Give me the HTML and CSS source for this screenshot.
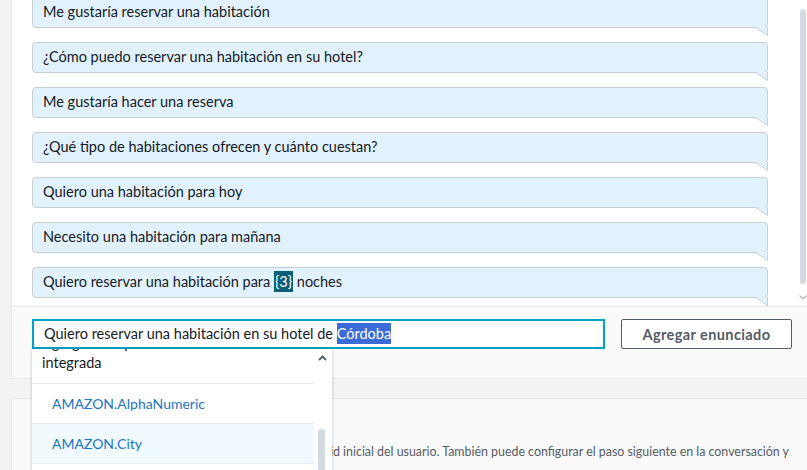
FILE: index.html
```
<!DOCTYPE html>
<html lang="es">
<head>
<meta charset="utf-8">
<link rel="stylesheet" href="styles.css">
</head>
<body>
<div class="page">
  <section class="panel utterances">
    <div class="list">
      <div class="bubbles">
        <div class="bubble">Me gustaría reservar una habitación<svg class="tail" width="12" height="9" viewBox="0 0 12 9"><polygon points="0,0 11.5,0 11.5,8.5" fill="#e1f2fc"/><path d="M0 0.5 L11.5 8.5 M11.5 0 V8.5" stroke="#c6cfd3" stroke-width="1" fill="none"/></svg></div>
        <div class="bubble">¿Cómo puedo reservar una habitación en su hotel?<svg class="tail" width="12" height="9" viewBox="0 0 12 9"><polygon points="0,0 11.5,0 11.5,8.5" fill="#e1f2fc"/><path d="M0 0.5 L11.5 8.5 M11.5 0 V8.5" stroke="#c6cfd3" stroke-width="1" fill="none"/></svg></div>
        <div class="bubble">Me gustaría hacer una reserva<svg class="tail" width="12" height="9" viewBox="0 0 12 9"><polygon points="0,0 11.5,0 11.5,8.5" fill="#e1f2fc"/><path d="M0 0.5 L11.5 8.5 M11.5 0 V8.5" stroke="#c6cfd3" stroke-width="1" fill="none"/></svg></div>
        <div class="bubble">¿Qué tipo de habitaciones ofrecen y cuánto cuestan?<svg class="tail" width="12" height="9" viewBox="0 0 12 9"><polygon points="0,0 11.5,0 11.5,8.5" fill="#e1f2fc"/><path d="M0 0.5 L11.5 8.5 M11.5 0 V8.5" stroke="#c6cfd3" stroke-width="1" fill="none"/></svg></div>
        <div class="bubble">Quiero una habitación para hoy<svg class="tail" width="12" height="9" viewBox="0 0 12 9"><polygon points="0,0 11.5,0 11.5,8.5" fill="#e1f2fc"/><path d="M0 0.5 L11.5 8.5 M11.5 0 V8.5" stroke="#c6cfd3" stroke-width="1" fill="none"/></svg></div>
        <div class="bubble">Necesito una habitación para mañana<svg class="tail" width="12" height="9" viewBox="0 0 12 9"><polygon points="0,0 11.5,0 11.5,8.5" fill="#e1f2fc"/><path d="M0 0.5 L11.5 8.5 M11.5 0 V8.5" stroke="#c6cfd3" stroke-width="1" fill="none"/></svg></div>
        <div class="bubble">Quiero reservar una habitación para <span class="slot">{3}</span> noches<svg class="tail" width="12" height="9" viewBox="0 0 12 9"><polygon points="0,0 11.5,0 11.5,8.5" fill="#e1f2fc"/><path d="M0 0.5 L11.5 8.5 M11.5 0 V8.5" stroke="#c6cfd3" stroke-width="1" fill="none"/></svg></div>
      </div>
      <div class="vscroll"><div class="thumb"></div><svg class="chev-down" width="8" height="5" viewBox="0 0 8 5"><path d="M0.5 0.5 L4 4 L7.5 0.5" stroke="#aab7b8" stroke-width="1.2" fill="none"/></svg></div>
    </div>
    <div class="footer">
      <div class="input">Quiero reservar una habitación en su hotel de <span class="sel">Córdoba</span></div>
      <button class="btn">Agregar enunciado</button>
      <div class="dropdown">
        <div class="dd-list">
          <div class="dd-head">Agregar un tipo de slot de la biblioteca<br>integrada</div>
          <div class="dd-item">AMAZON.AlphaNumeric</div>
          <div class="dd-item hover">AMAZON.City</div>
          <div class="dd-item">AMAZON.Country</div>
        </div>
        <div class="dd-scroll">
          <svg class="chev-up" width="9" height="6" viewBox="0 0 9 6"><path d="M1 5 L4.5 1.5 L8 5" stroke="#545b64" stroke-width="1.8" fill="none"/></svg>
          <div class="dd-thumb"></div>
        </div>
      </div>
    </div>
  </section>
  <section class="panel response">
    <h3 class="resp-title">Respuesta inicial</h3>
    <p class="resp-text"><span class="lead">Configure la respuesta que Amazon Lex envía tras la solicitu</span>d inicial del usuario. También puede configurar el paso siguiente en la conversación y</p>
  </section>
</div>
</body>
</html>
```
FILE: styles.css
```
* { box-sizing: border-box; }
html, body { margin: 0; padding: 0; }
body {
  background: #f2f3f3;
  font-family: Lato, "Open Sans", sans-serif;
  font-size: 14.5px;
  color: #16191f;
  width: 807px;
  height: 470px;
  overflow: hidden;
}
.page {
  padding-left: 11px;
  margin-right: -20px;
}
.panel {
  background: #fff;
  border: 1px solid #e4e7e8;
  border-top: 0;
}
.utterances { position: relative; }
.list {
  position: relative;
  height: 306px;
  overflow: hidden;
}
.bubbles {
  margin-top: -3px;
  padding: 0 58px 0 20px;
  display: flex;
  flex-direction: column;
  gap: 14px;
}
.bubble {
  position: relative;
  height: 31px;
  line-height: 28px;
  padding-left: 10px;
  background: #e1f2fc;
  border: 1px solid #c6cfd3;
  border-radius: 4px;
}
.tail {
  position: absolute;
  right: -1px;
  top: 100%;
  display: block;
}
.slot {
  background: #0b5d78;
  color: #fff;
  padding: 2px 1px;
}
.vscroll {
  position: absolute;
  left: 788px;
  top: 9px;
  width: 6px;
}
.thumb {
  width: 6px;
  height: 275px;
  background: #d3dbe2;
  border-radius: 3px;
}
.chev-down { display: block; margin: 11px 0 0 -1px; }
.footer {
  position: relative;
  height: 72px;
  border-top: 1px solid #e4e7e8;
  background: #fafafa;
  padding: 12px 20px 0;
  display: flex;
  align-items: flex-start;
  gap: 16px;
}
.input {
  width: 573px;
  height: 30px;
  border: 2px solid #00a1c9;
  background: #fff;
  padding-left: 10px;
  line-height: 26px;
  white-space: nowrap;
}
.sel { background: #3a6bd6; color: #fff; padding: 2px 0; }
.btn {
  width: 171px;
  height: 30px;
  border: 1px solid #545b64;
  border-radius: 2px;
  background: #fff;
  color: #545b64;
  font-family: Lato, "Open Sans", sans-serif;
  font-size: 14.5px;
  font-weight: 700;
  letter-spacing: 0.4px;
  padding: 0;
}
.dropdown {
  position: absolute;
  left: 20px;
  top: 42px;
  width: 300px;
  height: 140px;
  background: #fff;
  box-shadow: 0 1px 3px rgba(0,0,0,0.25);
  display: flex;
  overflow: hidden;
  z-index: 5;
  font-size: 14px;
}
.dd-list {
  width: 282px;
  margin-top: -16px;
}
.dd-head {
  padding: 0 0 0 10px;
  line-height: 20px;
  height: 51px;
  font-size: 14.5px;
  border-bottom: 1px solid #eaeded;
}
.dd-item {
  height: 40px;
  line-height: 39px;
  padding-left: 20px;
  color: #1b74bf;
  border-bottom: 1px solid #eaeded;
}
.dd-item.hover { background: #f1faff; }
.dd-scroll {
  position: relative;
  flex: 1;
}
.dd-scroll .chev-up { position: absolute; left: 4px; top: 6px; }
.dd-thumb {
  position: absolute;
  left: 4px;
  top: 80px;
  width: 7px;
  height: 60px;
  border-radius: 3px;
  background: #d3dbe2;
}
.response {
  margin-top: 19px;
  border-top: 1px solid #e4e7e8;
  background: #fafafa;
  height: 100px;
  padding: 12px 20px;
}
.resp-title {
  margin: 0;
  font-size: 16px;
  font-weight: 700;
  line-height: 22px;
}
.resp-text {
  margin: 9px 0 0;
  color: #545b64;
  font-size: 12.4px;
  white-space: nowrap;
  line-height: 20px;
}
.lead {
  display: inline-block;
  width: 301px;
  overflow: hidden;
  vertical-align: bottom;
  white-space: nowrap;
}
```
